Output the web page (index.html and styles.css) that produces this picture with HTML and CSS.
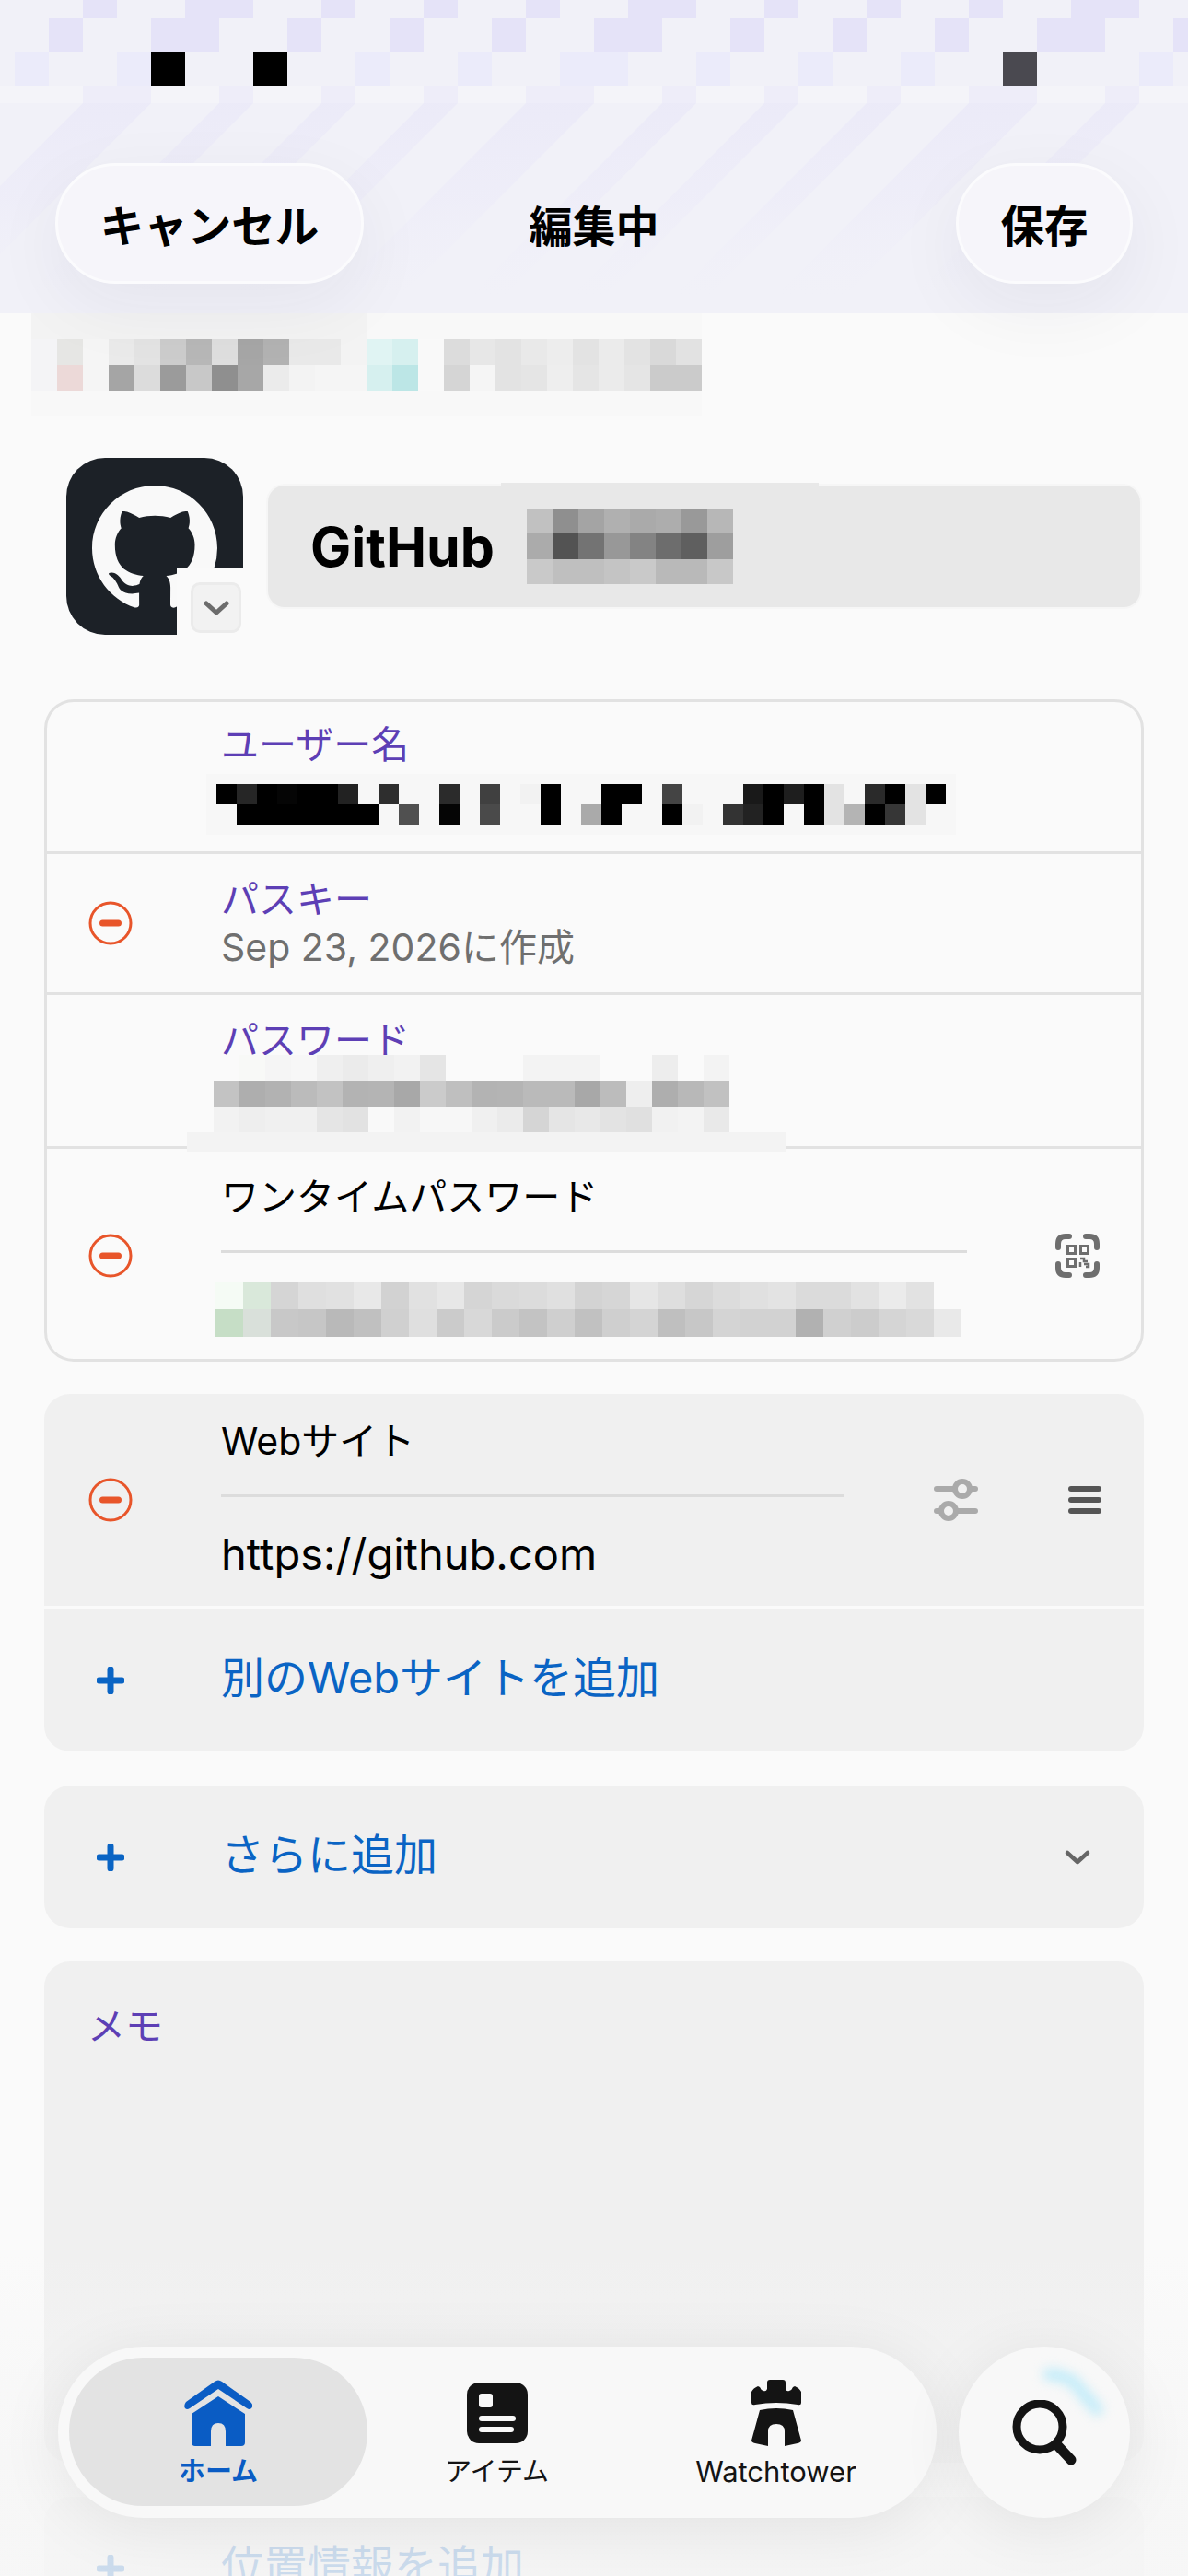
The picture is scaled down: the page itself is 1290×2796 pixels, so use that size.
FILE: index.html
```html
<!DOCTYPE html>
<html lang="ja">
<head>
  <meta charset="UTF-8">
  <meta name="viewport" content="width=device-width, initial-scale=1.0">
  <title>編集中</title>
  <link rel="stylesheet" href="styles.css">
</head>
<body>
  <div class="page">
    <header class="topbar">
      <svg class="topbar-bg" width="1290" height="340" viewBox="0 0 1290 340">
        <defs>
          <linearGradient id="stripeFade" gradientUnits="userSpaceOnUse" x1="0" y1="112" x2="0" y2="320">
            <stop offset="0" stop-color="#e6e4f8" stop-opacity="0.5"/>
            <stop offset="0.5" stop-color="#eae8f9" stop-opacity="0.4"/>
            <stop offset="1" stop-color="#eeedf9" stop-opacity="0"/>
          </linearGradient>
        </defs>
        <rect class="sky-pale" x="0" y="93" width="1290" height="19"/>
        <path fill="url(#stripeFade)" d="M90 112h74L-44 320h-74zM238 112h37L67 320H30zM349 112h37L178 320h-37zM460 112h37L289 320h-37zM571 112h74L437 320h-74zM719 112h37L548 320h-37zM830 112h37L659 320h-37zM941 112h37L770 320h-37zM1052 112h74L918 320h-74zM1200 112h37L1029 320h-37z"/>
        <g class="sky-a">
          <rect x="90" y="0" width="37" height="19"/><rect x="201" y="0" width="74" height="19"/><rect x="349" y="0" width="37" height="19"/><rect x="460" y="0" width="37" height="19"/><rect x="571" y="0" width="37" height="19"/><rect x="682" y="0" width="74" height="19"/><rect x="830" y="0" width="37" height="19"/><rect x="941" y="0" width="37" height="19"/><rect x="1052" y="0" width="37" height="19"/><rect x="1163" y="0" width="74" height="19"/>
          <rect x="53" y="19" width="37" height="37"/><rect x="164" y="19" width="74" height="37"/><rect x="312" y="19" width="37" height="37"/><rect x="423" y="19" width="37" height="37"/><rect x="534" y="19" width="37" height="37"/><rect x="645" y="19" width="74" height="37"/><rect x="793" y="19" width="37" height="37"/><rect x="904" y="19" width="37" height="37"/><rect x="1015" y="19" width="37" height="37"/><rect x="1126" y="19" width="74" height="37"/><rect x="1274" y="19" width="16" height="37"/>
        </g>
        <g class="sky-b">
          <rect x="16" y="56" width="37" height="37"/><rect x="127" y="56" width="37" height="37"/><rect x="386" y="56" width="37" height="37"/><rect x="497" y="56" width="37" height="37"/><rect x="608" y="56" width="74" height="37"/><rect x="756" y="56" width="37" height="37"/><rect x="867" y="56" width="37" height="37"/><rect x="978" y="56" width="37" height="37"/><rect x="1237" y="56" width="37" height="37"/>
        </g>
        <g class="sky-c">
          <rect x="90" y="93" width="74" height="19"/><rect x="238" y="93" width="37" height="19"/><rect x="349" y="93" width="37" height="19"/><rect x="460" y="93" width="37" height="19"/><rect x="571" y="93" width="74" height="19"/><rect x="719" y="93" width="37" height="19"/><rect x="830" y="93" width="37" height="19"/><rect x="941" y="93" width="37" height="19"/><rect x="1052" y="93" width="74" height="19"/><rect x="1200" y="93" width="37" height="19"/>
        </g>
        <rect class="sky-black" x="164" y="56" width="37" height="37"/>
        <rect class="sky-black" x="275" y="56" width="37" height="37"/>
        <rect class="sky-dark" x="1089" y="56" width="37" height="37"/>
      </svg>
      <button type="button" class="glass-btn cancel-btn">キャンセル</button>
      <h1 class="topbar-title">編集中</h1>
      <button type="button" class="glass-btn save-btn">保存</button>
    </header>

    <main>
      <svg class="mosaic mosaic-sub" viewBox="0 -1 26 4" width="728" height="112" preserveAspectRatio="none">
        <rect class="halo-half" x="0" y="-1" fill="#f3f3f3"/><rect class="halo-half" x="13" y="-1" fill="#f8f8f8"/>
        <rect class="halo-full" x="0" y="2" fill="#f8f8f8"/>
        <rect x="0" fill="#f4f4f6"/><rect x="1" fill="#e6e6e4"/><rect x="2" fill="#f5f5f5"/><rect x="3" fill="#eaeaea"/><rect x="4" fill="#e3e3e3"/><rect x="5" fill="#cccccc"/><rect x="6" fill="#b7b7b7"/><rect x="7" fill="#dedede"/><rect x="8" fill="#a6a6a6"/><rect x="9" fill="#b2b2b2"/><rect x="10" fill="#e9e9e9"/><rect x="11" fill="#e9e9e9"/><rect x="12" fill="#f3f3f3"/><rect x="13" fill="#e0f4f3"/><rect x="14" fill="#d6f0ef"/><rect x="15" fill="#f9f9f9"/><rect x="16" fill="#dcdcdc"/><rect x="17" fill="#e7e7e7"/><rect x="18" fill="#e3e3e3"/><rect x="19" fill="#e9e9e9"/><rect x="20" fill="#ededed"/><rect x="21" fill="#e3e3e3"/><rect x="22" fill="#ebebeb"/><rect x="23" fill="#e3e3e3"/><rect x="24" fill="#d9d9d9"/><rect x="25" fill="#e2e2e2"/>
        <rect x="0" y="1" fill="#f4f4f6"/><rect x="1" y="1" fill="#ecd9d8"/><rect x="2" y="1" fill="#f5f5f5"/><rect x="3" y="1" fill="#a5a5a5"/><rect x="4" y="1" fill="#dcdcdc"/><rect x="5" y="1" fill="#9b9b9b"/><rect x="6" y="1" fill="#c8c8c8"/><rect x="7" y="1" fill="#8f8f8f"/><rect x="8" y="1" fill="#a7a7a7"/><rect x="9" y="1" fill="#ebebeb"/><rect x="10" y="1" fill="#f3f3f3"/><rect x="11" y="1" fill="#f5f5f5"/><rect x="12" y="1" fill="#f5f5f5"/><rect x="13" y="1" fill="#d6f0ef"/><rect x="14" y="1" fill="#bce6e6"/><rect x="15" y="1" fill="#f9f9f9"/><rect x="16" y="1" fill="#d5d5d5"/><rect x="17" y="1" fill="#f5f5f5"/><rect x="18" y="1" fill="#e3e3e3"/><rect x="19" y="1" fill="#e5e5e5"/><rect x="20" y="1" fill="#eeeeee"/><rect x="21" y="1" fill="#e5e5e5"/><rect x="22" y="1" fill="#ebebeb"/><rect x="23" y="1" fill="#e5e5e5"/><rect x="24" y="1" fill="#cbcbcb"/><rect x="25" y="1" fill="#cbcbcb"/>
      </svg>

      <section class="identity">
        <div class="app-icon">
          <svg class="app-mark" viewBox="0 0 16 16" width="136" height="136"><path d="M8 0C3.58 0 0 3.58 0 8c0 3.54 2.29 6.53 5.47 7.59.4.07.55-.17.55-.38 0-.19-.01-.82-.01-1.49-2.01.37-2.53-.49-2.69-.94-.09-.23-.48-.94-.82-1.13-.28-.15-.68-.52-.01-.53.63-.01 1.08.58 1.23.82.72 1.21 1.87.87 2.33.66.07-.52.28-.87.51-1.07-1.78-.2-3.64-.89-3.64-3.95 0-.87.31-1.59.82-2.15-.08-.2-.36-1.02.08-2.12 0 0 .67-.21 2.2.82.64-.18 1.32-.27 2-.27.68 0 1.36.09 2 .27 1.53-1.04 2.2-.82 2.2-.82.44 1.1.16 1.92.08 2.12.51.56.82 1.28.82 2.15 0 3.07-1.87 3.75-3.65 3.95.29.25.54.73.54 1.48 0 1.07-.01 1.93-.01 2.2 0 .21.15.46.55.38A8.013 8.013 0 0016 8c0-4.42-3.58-8-8-8z"/></svg>
          <div class="icon-notch">
            <button type="button" class="icon-picker">
              <svg viewBox="0 0 28 16" width="28" height="16"><path d="M3 3l11 10L25 3" fill="none" stroke="#6c6c6c" stroke-width="5" stroke-linecap="round" stroke-linejoin="round"/></svg>
            </button>
          </div>
        </div>
        <div class="title-field">
          <span class="title-text">GitHub</span>
          <svg class="mosaic" viewBox="0 0 8 3" width="224" height="82" preserveAspectRatio="none">
            <rect x="0" fill="#c1c1c1"/><rect x="1" fill="#8f8f8f"/><rect x="2" fill="#a4a4a4"/><rect x="3" fill="#b0b0b0"/><rect x="4" fill="#aaaaaa"/><rect x="5" fill="#adadad"/><rect x="6" fill="#999999"/><rect x="7" fill="#b7b7b7"/>
            <rect x="0" y="1" fill="#ababab"/><rect x="1" y="1" fill="#535353"/><rect x="2" y="1" fill="#737373"/><rect x="3" y="1" fill="#989898"/><rect x="4" y="1" fill="#838383"/><rect x="5" y="1" fill="#6d6d6d"/><rect x="6" y="1" fill="#5f5f5f"/><rect x="7" y="1" fill="#9e9e9e"/>
            <rect x="0" y="2" fill="#c9c9c9"/><rect x="1" y="2" fill="#bfbfbf"/><rect x="2" y="2" fill="#bfbfbf"/><rect x="3" y="2" fill="#c4c4c4"/><rect x="4" y="2" fill="#c9c9c9"/><rect x="5" y="2" fill="#b9b9b9"/><rect x="6" y="2" fill="#b9b9b9"/><rect x="7" y="2" fill="#c8c8c8"/>
          </svg>
        </div>
      </section>

      <section class="card card-outline">
        <div class="row row-user">
          <div class="row-icon"></div>
          <div class="row-body">
            <div class="label label-accent">ユーザー名</div>
            <svg class="mosaic mosaic-user" viewBox="-0.5 -0.5 37 3" width="814" height="66" preserveAspectRatio="none">
              <rect x="0" fill="#000"/><rect x="1" fill="#262626"/><rect x="2" fill="#000"/><rect x="3" fill="#050505"/><rect x="4" fill="#000"/><rect x="5" fill="#000"/><rect x="6" fill="#222"/><rect x="8" fill="#2e2e2e"/><rect x="11" fill="#2b2b2b"/><rect x="13" fill="#404040"/><rect x="15" fill="#f2f2f2"/><rect x="16" fill="#000"/><rect x="19" fill="#000"/><rect x="20" fill="#000"/><rect x="22" fill="#444"/><rect x="26" fill="#191919"/><rect x="27" fill="#000"/><rect x="28" fill="#1e1e1e"/><rect x="29" fill="#000"/><rect x="30" fill="#e3e3e3"/><rect x="32" fill="#2a2a2a"/><rect x="33" fill="#000"/><rect x="34" fill="#e3e3e3"/><rect x="35" fill="#000"/>
              <rect x="1" y="1" fill="#000"/><rect x="2" y="1" fill="#000"/><rect x="3" y="1" fill="#000"/><rect x="4" y="1" fill="#000"/><rect x="5" y="1" fill="#000"/><rect x="6" y="1" fill="#000"/><rect x="7" y="1" fill="#000"/><rect x="9" y="1" fill="#505050"/><rect x="11" y="1" fill="#050505"/><rect x="13" y="1" fill="#4a4a4a"/><rect x="16" y="1" fill="#000"/><rect x="18" y="1" fill="#aaaaaa"/><rect x="19" y="1" fill="#000"/><rect x="22" y="1" fill="#000"/><rect x="23" y="1" fill="#f2f2f2"/><rect x="25" y="1" fill="#333"/><rect x="26" y="1" fill="#222"/><rect x="27" y="1" fill="#000"/><rect x="29" y="1" fill="#000"/><rect x="30" y="1" fill="#e3e3e3"/><rect x="31" y="1" fill="#b4b4b4"/><rect x="32" y="1" fill="#000"/><rect x="33" y="1" fill="#363636"/><rect x="34" y="1" fill="#e3e3e3"/>
            </svg>
          </div>
        </div>

        <div class="row row-passkey">
          <div class="row-icon">
            <svg viewBox="0 0 48 48" width="48" height="48"><circle cx="24" cy="24" r="22" fill="none" stroke="#e8552a" stroke-width="3"/><rect x="12" y="20.5" width="24" height="7" rx="3.5" fill="#e8552a"/></svg>
          </div>
          <div class="row-body">
            <div class="label label-accent">パスキー</div>
            <div class="detail">Sep 23, 2026に作成</div>
          </div>
        </div>

        <div class="row row-password">
          <div class="row-icon"></div>
          <div class="row-body">
            <div class="label label-accent">パスワード</div>
            <svg class="mosaic mosaic-pass" viewBox="0 0 20 3" width="560" height="84" preserveAspectRatio="none">
              <rect x="0" fill="#fafafa"/><rect x="1" fill="#f8f9f7"/><rect x="2" fill="#f5f5f5"/><rect x="3" fill="#f7f7f7"/><rect x="4" fill="#efefef"/><rect x="5" fill="#ebebeb"/><rect x="6" fill="#efefef"/><rect x="7" fill="#f2f2f2"/><rect x="8" fill="#e5e5e5"/><rect x="12" fill="#f3f3f3"/><rect x="13" fill="#f3f3f3"/><rect x="14" fill="#f3f3f3"/><rect x="17" fill="#ededed"/><rect x="19" fill="#f3f3f3"/>
              <rect x="0" y="1" fill="#c3c3c3"/><rect x="1" y="1" fill="#aeaeae"/><rect x="2" y="1" fill="#b2b2b2"/><rect x="3" y="1" fill="#bbbbbb"/><rect x="4" y="1" fill="#c2c2c2"/><rect x="5" y="1" fill="#b3b3b3"/><rect x="6" y="1" fill="#b4b4b4"/><rect x="7" y="1" fill="#a8a8a8"/><rect x="8" y="1" fill="#cbcbcb"/><rect x="9" y="1" fill="#bfbfbf"/><rect x="10" y="1" fill="#b3b3b3"/><rect x="11" y="1" fill="#b4b4b4"/><rect x="12" y="1" fill="#bababa"/><rect x="13" y="1" fill="#bababa"/><rect x="14" y="1" fill="#a8a8a8"/><rect x="15" y="1" fill="#bcbcbc"/><rect x="16" y="1" fill="#eeeeee"/><rect x="17" y="1" fill="#aeaeae"/><rect x="18" y="1" fill="#b8b8b8"/><rect x="19" y="1" fill="#c1c1c1"/>
              <rect x="0" y="2" fill="#f2f2f2"/><rect x="1" y="2" fill="#eeeeee"/><rect x="2" y="2" fill="#f0f0f0"/><rect x="3" y="2" fill="#f0f0f0"/><rect x="4" y="2" fill="#e5e5e5"/><rect x="5" y="2" fill="#e2e2e2"/><rect x="6" y="2" fill="#f9f9f9"/><rect x="7" y="2" fill="#f2f2f2"/><rect x="8" y="2" fill="#f7f7f7"/><rect x="9" y="2" fill="#f7f7f7"/><rect x="10" y="2" fill="#f0f0f0"/><rect x="11" y="2" fill="#ebebeb"/><rect x="12" y="2" fill="#d5d5d5"/><rect x="13" y="2" fill="#e5e5e5"/><rect x="14" y="2" fill="#e8e8e8"/><rect x="15" y="2" fill="#e3e3e3"/><rect x="16" y="2" fill="#e0e0e0"/><rect x="17" y="2" fill="#f1f1f1"/><rect x="18" y="2" fill="#f3f3f3"/><rect x="19" y="2" fill="#e9e9e9"/>
            </svg>
          </div>
        </div>

        <div class="row row-otp">
          <div class="row-icon">
            <svg viewBox="0 0 48 48" width="48" height="48"><circle cx="24" cy="24" r="22" fill="none" stroke="#e8552a" stroke-width="3"/><rect x="12" y="20.5" width="24" height="7" rx="3.5" fill="#e8552a"/></svg>
          </div>
          <div class="row-body">
            <div class="label">ワンタイムパスワード</div>
            <div class="field-line"></div>
            <svg class="mosaic mosaic-otp" viewBox="0 0 27 2" width="810" height="60" preserveAspectRatio="none">
              <rect x="0" fill="#f5fbf5"/><rect x="1" fill="#d9e8da"/><rect x="2" fill="#d5d5d5"/><rect x="3" fill="#dfdfdf"/><rect x="4" fill="#e1e1e1"/><rect x="5" fill="#e8e8e8"/><rect x="6" fill="#d2d2d2"/><rect x="7" fill="#e1e1e1"/><rect x="8" fill="#e7e7e7"/><rect x="9" fill="#d5d5d5"/><rect x="10" fill="#dadada"/><rect x="11" fill="#dcdcdc"/><rect x="12" fill="#e0e0e0"/><rect x="13" fill="#d3d3d3"/><rect x="14" fill="#d6d6d6"/><rect x="15" fill="#e6e6e6"/><rect x="16" fill="#dedede"/><rect x="17" fill="#d6d6d6"/><rect x="18" fill="#dcdcdc"/><rect x="19" fill="#e0e0e0"/><rect x="20" fill="#e3e3e3"/><rect x="21" fill="#dbdbdb"/><rect x="22" fill="#dbdbdb"/><rect x="23" fill="#e2e2e2"/><rect x="24" fill="#ebebeb"/><rect x="25" fill="#e2e2e2"/>
              <rect x="0" y="1" fill="#c6dec6"/><rect x="1" y="1" fill="#d9e0da"/><rect x="2" y="1" fill="#c8c8c8"/><rect x="3" y="1" fill="#c6c6c6"/><rect x="4" y="1" fill="#b9b9b9"/><rect x="5" y="1" fill="#c0c0c0"/><rect x="6" y="1" fill="#d0d0d0"/><rect x="7" y="1" fill="#dfdfdf"/><rect x="8" y="1" fill="#cbcbcb"/><rect x="9" y="1" fill="#d8d8d8"/><rect x="10" y="1" fill="#cbcbcb"/><rect x="11" y="1" fill="#c3c3c3"/><rect x="12" y="1" fill="#cfcfcf"/><rect x="13" y="1" fill="#c1c1c1"/><rect x="14" y="1" fill="#cfcfcf"/><rect x="15" y="1" fill="#d4d4d4"/><rect x="16" y="1" fill="#bfbfbf"/><rect x="17" y="1" fill="#c7c7c7"/><rect x="18" y="1" fill="#d4d4d4"/><rect x="19" y="1" fill="#d2d2d2"/><rect x="20" y="1" fill="#d2d2d2"/><rect x="21" y="1" fill="#b1b1b1"/><rect x="22" y="1" fill="#d0d0d0"/><rect x="23" y="1" fill="#cccccc"/><rect x="24" y="1" fill="#d5d5d5"/><rect x="25" y="1" fill="#d9d9d9"/><rect x="26" y="1" fill="#e9e9e9"/>
            </svg>
          </div>
          <div class="row-tools tools-otp">
            <svg viewBox="0 0 48 48" width="48" height="48" fill="none" stroke="#6e6e6e">
              <path stroke-width="6" stroke-linecap="round" d="M3 15v-4q0-8 8-8h4M33 3h4q8 0 8 8v4M45 33v4q0 8-8 8h-4M15 45h-4q-8 0-8-8v-4"/>
              <path stroke-width="3" d="M13.5 13.5h8v8h-8zM27.5 13.5h8v8h-8zM13.5 27.5h8v8h-8z"/>
              <path stroke-width="2.5" d="M27 27h4v3h4M27 31v5M31 33h5v3h-3"/>
            </svg>
          </div>
        </div>
      </section>

      <section class="card card-web">
        <div class="row row-web">
          <div class="row-icon">
            <svg viewBox="0 0 48 48" width="48" height="48"><circle cx="24" cy="24" r="22" fill="none" stroke="#e8552a" stroke-width="3"/><rect x="12" y="20.5" width="24" height="7" rx="3.5" fill="#e8552a"/></svg>
          </div>
          <div class="row-body">
            <div class="label">Webサイト</div>
            <div class="field-line"></div>
            <div class="url-text">https://github.com</div>
          </div>
          <div class="row-tools tools-web">
            <svg viewBox="0 0 48 46" width="48" height="46">
              <path d="M3 11h42M3 35h42" stroke="#aaaaaa" stroke-width="6" stroke-linecap="round"/>
              <circle cx="31" cy="11" r="8" fill="#f0f0f0" stroke="#aaaaaa" stroke-width="6"/>
              <circle cx="16" cy="35" r="8" fill="#f0f0f0" stroke="#aaaaaa" stroke-width="6"/>
            </svg>
            <div class="handle"><span></span><span></span><span></span></div>
          </div>
        </div>
        <div class="row row-add">
          <div class="row-icon">
            <svg viewBox="0 0 30 30" width="30" height="30"><path d="M15 3v24M3 15h24" stroke="#0a64c4" stroke-width="7" stroke-linecap="round"/></svg>
          </div>
          <div class="row-body action-text">別のWebサイトを追加</div>
        </div>
      </section>

      <section class="card">
        <div class="row row-add row-more">
          <div class="row-icon">
            <svg viewBox="0 0 30 30" width="30" height="30"><path d="M15 3v24M3 15h24" stroke="#0a64c4" stroke-width="7" stroke-linecap="round"/></svg>
          </div>
          <div class="row-body action-text">さらに追加</div>
          <svg class="more-chevron" viewBox="0 0 30 20" width="30" height="20"><path d="M4 5l11 10L26 5" fill="none" stroke="#666666" stroke-width="4.5" stroke-linecap="round" stroke-linejoin="round"/></svg>
        </div>
      </section>

      <section class="card card-notes">
        <div class="label label-accent">メモ</div>
      </section>

      <section class="card">
        <div class="row row-add">
          <div class="row-icon">
            <svg viewBox="0 0 30 30" width="30" height="30"><path d="M15 3v24M3 15h24" stroke="#0a64c4" stroke-width="7" stroke-linecap="round"/></svg>
          </div>
          <div class="row-body action-text">位置情報を追加</div>
        </div>
      </section>
    </main>

    <div class="bottom-fade"></div>

    <nav class="dock">
      <div class="tabs">
        <div class="tab tab-home tab-active">
          <div class="tab-icon">
            <svg viewBox="0 0 74 72" width="74" height="72" fill="#0a5cc4">
              <path d="M33 2q4-3 8 0l31 22q4 4 1 7-2 2-5 0L37 10 6 31q-3 2-5 0-2-3 1-7z"/>
              <path d="M37 18l29 19v31q0 4-4 4H45V56q0-9-8-9t-8 9v16H12q-4 0-4-4V37z"/>
            </svg>
          </div>
          <span class="tab-label">ホーム</span>
        </div>
        <div class="tab tab-items">
          <div class="tab-icon">
            <svg viewBox="0 0 66 66" width="66" height="66">
              <rect width="66" height="66" rx="13" fill="#141414"/>
              <rect x="13" y="12" width="15" height="15" rx="3" fill="#f8f8f8"/>
              <rect x="13" y="36" width="40" height="6" rx="3" fill="#f8f8f8"/>
              <rect x="13" y="48" width="38" height="6" rx="3" fill="#f8f8f8"/>
            </svg>
          </div>
          <span class="tab-label">アイテム</span>
        </div>
        <div class="tab tab-tower">
          <div class="tab-icon">
            <svg viewBox="0 0 54 72" width="54" height="72" fill="#141414">
              <path d="M17 3q0-3 3-3h14q3 0 3 3v7q1 3 4 2 3-1 4-4l2-1q5 2 7 6v12q0 3-4 2-23-4-46 0-4 1-4-2V13q2-4 7-6l2 1q1 3 4 4 3 1 4-2z"/>
              <path d="M9 33q18-4 36 0l9 33q0 2-4 3l-14 3V56q0-8-9-8t-9 8v16L4 69q-4-1-4-3z"/>
            </svg>
          </div>
          <span class="tab-label">Watchtower</span>
        </div>
      </div>
      <button type="button" class="search-btn">
        <svg class="search-glow" viewBox="0 0 74 56" width="74" height="56"><path d="M6 6q22 2 30 12t22 26" fill="none" stroke="#c4ecf9" stroke-width="14" stroke-linecap="round" stroke-dasharray="14 8"/></svg>
        <svg viewBox="0 0 70 70" width="70" height="70" fill="none" stroke="#141414"><circle cx="30" cy="29" r="25" stroke-width="9"/><path d="M49 49l15 16" stroke-width="11" stroke-linecap="round"/></svg>
      </button>
    </nav>
  </div>
</body>
</html>
```

FILE: styles.css
```css
body {
  margin: 0;
  background-color: #fafafa;
  font-family: Inter, "Noto Sans CJK JP", sans-serif;
  color: #000;
}
.page {
  position: relative;
  width: 1290px;
  height: 2796px;
  overflow: hidden;
}
button {
  font-family: inherit;
  color: inherit;
  padding: 0;
}
svg {
  display: block;
}

/* top bar */
.topbar {
  position: relative;
  height: 340px;
  box-sizing: border-box;
  padding: 177px 60px 32px;
  background-color: #f1f1f8;
  display: grid;
  grid-template-columns: 1fr auto 1fr;
  align-items: center;
  z-index: 1;
}
.topbar-bg {
  position: absolute;
  left: 0;
  top: 0;
}
.sky-pale { fill: #f4f4f9; }
.sky-a { fill: #e5e3f8; }
.sky-b { fill: #ebebfa; }
.sky-c { fill: #eeedf9; }
.sky-black { fill: #000; }
.sky-dark { fill: #4a4950; }
.glass-btn {
  position: relative;
  height: 131px;
  border: 3px solid #fbfbfd;
  border-radius: 66px;
  background-color: #f6f5fa;
  box-shadow: 0 24px 80px rgba(40, 40, 60, 0.06);
  font-size: 47.5px;
  font-weight: 700;
}
.cancel-btn {
  width: 335px;
  justify-self: start;
}
.save-btn {
  width: 192px;
  justify-self: end;
}
.topbar-title {
  position: relative;
  margin: 0;
  font-size: 47px;
  font-weight: 700;
}

/* pixelated blocks */
.mosaic {
  flex: none;
  shape-rendering: crispEdges;
}
.mosaic rect {
  width: 1px;
  height: 1px;
}
.mosaic rect.halo-half {
  width: 13px;
}
.mosaic rect.halo-full {
  width: 26px;
}
.mosaic-sub {
  margin-left: 34px;
}
.mosaic-user {
  margin: 7px 0 0 -16px;
  background-color: #f7f7f7;
}
.mosaic-pass {
  position: relative;
  margin: -9px 0 0 -8px;
}
.mosaic-otp {
  margin: 31px 0 0 -6px;
}

/* icon and title */
.identity {
  display: flex;
  gap: 27px;
  margin-top: 45px;
  padding: 0 52px 0 72px;
}
.app-icon {
  position: relative;
  flex: none;
  width: 192px;
  height: 192px;
  border-radius: 42px;
  background-color: #1c2127;
}
.app-mark {
  position: absolute;
  left: 28px;
  top: 30px;
  fill: #f9f9f9;
}
.icon-notch {
  position: absolute;
  right: 0;
  bottom: 0;
  width: 72px;
  height: 72px;
  background-color: #fafafa;
}
.icon-picker {
  position: absolute;
  right: 2px;
  bottom: 2px;
  width: 55px;
  height: 55px;
  box-sizing: border-box;
  border: 3px solid #ebebeb;
  border-radius: 10px;
  background-color: #f2f2f2;
  display: flex;
  align-items: center;
  justify-content: center;
}
.title-field {
  position: relative;
  flex: 1;
  height: 132px;
  margin-top: 30px;
  padding-left: 46px;
  display: flex;
  align-items: center;
  gap: 35px;
  border-radius: 18px;
  background-color: #e8e8e8;
  box-shadow: 0 0 0 2px #f6f6f6;
}
.title-field::before {
  content: "";
  position: absolute;
  left: 253px;
  top: -3px;
  width: 345px;
  height: 3px;
  background-color: #e8e8e8;
}
.title-text {
  font-size: 59px;
  font-weight: 700;
}

/* cards */
main {
  display: block;
}
.card {
  margin: 37px 48px 0;
  border-radius: 28px;
  background-color: #f0f0f0;
}
.card-outline {
  margin-top: 70px;
  border-radius: 32px;
  background-color: transparent;
  box-shadow: inset 0 0 0 3px #e2e2e2;
}
.card-web {
  margin-top: 35px;
}
.card-notes {
  height: 544px;
  box-sizing: border-box;
  margin-top: 36px;
  padding: 45px 47px;
}
.row {
  position: relative;
  display: flex;
  align-items: center;
  border-bottom: 3px solid #e2e2e2;
}
.row:last-child {
  border-bottom: 0;
}
.row-icon {
  flex: none;
  width: 144px;
  display: flex;
  justify-content: center;
}
.row-body {
  flex: 1;
  min-width: 0;
  padding-left: 48px;
}
.row-user { padding: 24px 0 18px; }
.row-passkey { padding: 24px 0 24px; }
.row-password { padding: 24px 0 15px; }
.row-otp { padding: 27px 0 27px; }
.row-web {
  padding: 26px 0 26px;
  border-bottom-color: #fafafa;
}
.row-add {
  height: 155px;
}
.row-password::after {
  content: "";
  position: absolute;
  left: 155px;
  top: 149px;
  width: 650px;
  height: 21px;
  background-color: #f3f3f3;
}
.row-tools {
  flex: none;
  display: flex;
  align-items: center;
}
.tools-otp {
  padding: 0 48px 0 96px;
}
.tools-web {
  gap: 98px;
  padding: 0 46px 0 97px;
}
.row-more {
  padding-right: 57px;
}

.label {
  font-size: 41px;
  line-height: 50px;
}
.label-accent {
  color: #5d3fb5;
}
.detail {
  margin-top: 2px;
  font-size: 41px;
  line-height: 50px;
  color: #6f6f6f;
}
.field-line {
  height: 3px;
  margin-top: 33px;
  background-color: #dcdcdc;
}
.url-text {
  margin-top: 32px;
  font-size: 47px;
  line-height: 60px;
}
.action-text {
  font-size: 47px;
  line-height: 60px;
  padding-bottom: 6px;
  color: #0a64c4;
}
.handle {
  width: 36px;
}
.handle span {
  display: block;
  height: 6px;
  margin-top: 6px;
  border-radius: 3px;
  background-color: #555;
}
.handle span:first-child {
  margin-top: 0;
}

/* bottom dock */
.bottom-fade {
  position: absolute;
  left: 0;
  right: 0;
  bottom: 0;
  height: 350px;
  background: linear-gradient(rgba(246, 246, 246, 0), rgba(246, 246, 246, 0.82) 70%);
}
.dock {
  position: absolute;
  left: 63px;
  bottom: 63px;
  display: flex;
  gap: 24px;
}
.tabs {
  display: flex;
  height: 186px;
  width: 954px;
  box-sizing: border-box;
  padding: 12px 12px 13px;
  border-radius: 93px;
  background-color: #f8f8f8;
  box-shadow: 0 10px 70px rgba(0, 0, 0, 0.08);
}
.tab {
  display: flex;
  flex-direction: column;
  align-items: center;
  padding-top: 24px;
  box-sizing: border-box;
}
.tab-home { width: 324px; }
.tab-items { width: 281px; }
.tab-tower { width: 325px; }
.tab-active {
  border-radius: 80px;
  background-color: #e3e3e3;
}
.tab-icon {
  height: 72px;
  display: flex;
  align-items: center;
}
.tab-label {
  margin-top: 11px;
  font-size: 29px;
  line-height: 34px;
  color: #141414;
}
.tab-tower .tab-label {
  font-size: 31px;
}
.tab-active .tab-label {
  color: #0a5cc4;
  font-weight: 700;
}
.search-btn {
  position: relative;
  width: 186px;
  height: 186px;
  border: 0;
  border-radius: 50%;
  background-color: #f8f8f8;
  box-shadow: 0 10px 70px rgba(0, 0, 0, 0.08);
  display: flex;
  align-items: center;
  justify-content: center;
}
.search-glow {
  position: absolute;
  left: 92px;
  top: 24px;
  filter: blur(6px);
}
```
